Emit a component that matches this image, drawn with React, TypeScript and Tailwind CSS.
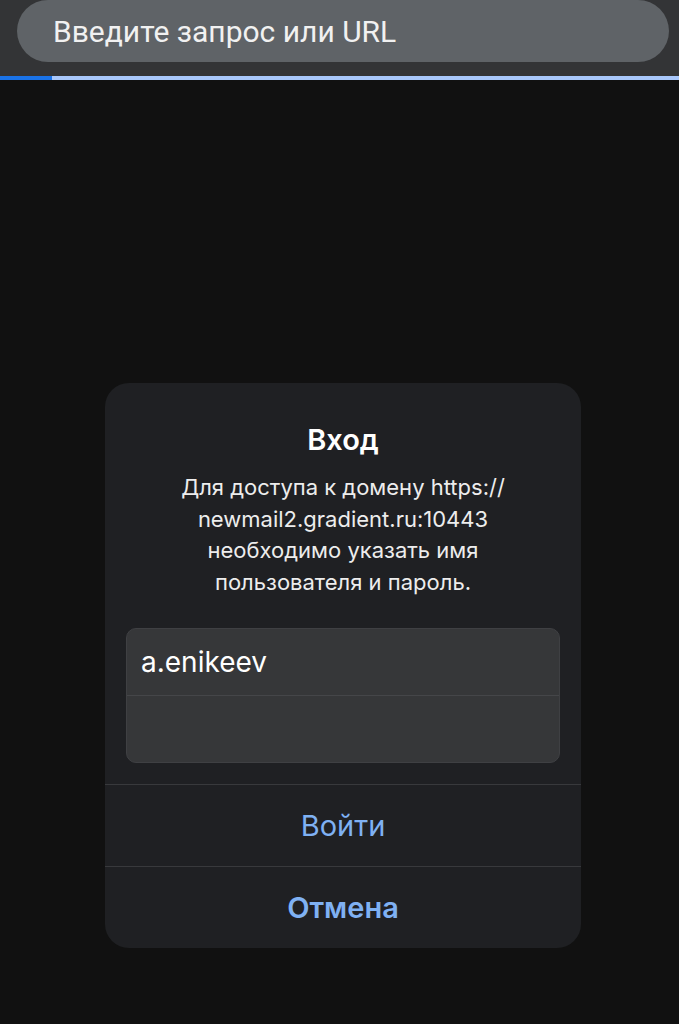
export default function App() {
  return (
    <div className="min-h-screen w-[679px] h-[1024px] bg-[#111111] flex flex-col overflow-hidden">
      {/* browser toolbar */}
      <div className="bg-[#333436] h-[76px] px-[17px] pr-[10px]">
        <div className="h-[62px] rounded-full bg-[#5f6367] flex items-center pl-[36px]">
          <span className="text-[#f1f1f1] text-[30px] font-['Roboto',sans-serif]">Введите запрос или URL</span>
        </div>
      </div>
      <div className="flex h-[4px]">
        <div className="w-[52px] bg-[#1a73e8]"></div>
        <div className="flex-1 bg-[#a8c7fa]"></div>
      </div>

      <div className="flex justify-center pt-[303px] pl-[7px]">
        <div className="w-[476px] h-[565px] rounded-[24px] bg-[#1f2023] flex flex-col font-['Inter','Noto_Sans',sans-serif]">
          <div className="flex flex-col items-center pt-[40px] px-[21px] pb-[21px]">
            <h1 className="text-white text-[29px] font-semibold leading-[34px]">Вход</h1>
            <p className="mt-[15px] text-[#ededed] text-[22px] leading-[31.5px] text-center whitespace-nowrap">
              Для доступа к домену https://
              <br />
              newmail2.gradient.ru:10443
              <br />
              необходимо указать имя
              <br />
              пользователя и пароль.
            </p>
            <div className="mt-[30px] w-full h-[135px] rounded-[10px] bg-[#363739] border border-[#3f4043] flex flex-col">
              <div className="h-[67px] flex items-center px-[14px] border-b border-[#454649]">
                <span className="text-white text-[28px]">a.enikeev</span>
              </div>
              <div className="flex-1"></div>
            </div>
          </div>
          <div className="border-t border-[#38393c] h-[82px] flex items-center justify-center">
            <span className="text-[#7fb1f3] text-[29px]">Войти</span>
          </div>
          <div className="border-t border-[#38393c] flex-1 flex items-center justify-center">
            <span className="text-[#7fb1f3] text-[29px] font-semibold">Отмена</span>
          </div>
        </div>
      </div>
    </div>
  );
}
